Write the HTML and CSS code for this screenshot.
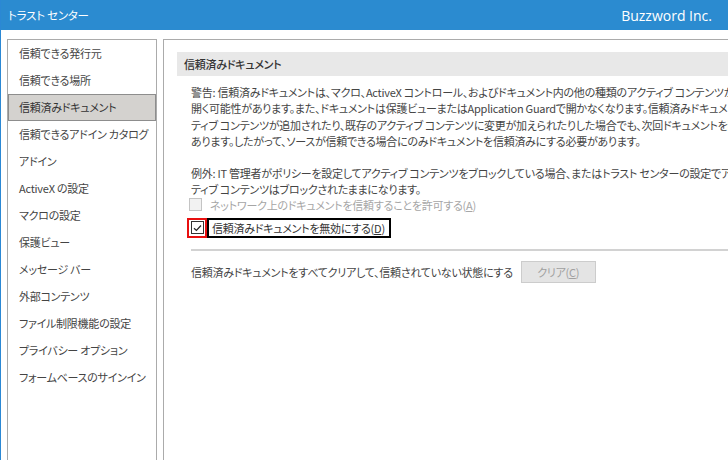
FILE: index.html
```html
<!DOCTYPE html>
<html lang="ja">
<head>
<meta charset="utf-8">
<title>トラスト センター</title>
<link rel="stylesheet" href="styles.css">
</head>
<body>
<div class="window">
  <header class="titlebar">
    <span class="title">トラスト センター</span>
    <span class="brand">Buzzword Inc.</span>
  </header>
  <div class="body">
    <nav class="nav">
      <div class="nav-item">信頼できる発行元</div>
      <div class="nav-item">信頼できる場所</div>
      <div class="nav-item selected">信頼済みドキュメント</div>
      <div class="nav-item">信頼できるアドイン カタログ</div>
      <div class="nav-item">アドイン</div>
      <div class="nav-item">ActiveX の設定</div>
      <div class="nav-item">マクロの設定</div>
      <div class="nav-item">保護ビュー</div>
      <div class="nav-item">メッセージ バー</div>
      <div class="nav-item">外部コンテンツ</div>
      <div class="nav-item">ファイル制限機能の設定</div>
      <div class="nav-item">プライバシー オプション</div>
      <div class="nav-item">フォームベースのサインイン</div>
    </nav>
    <main class="main">
      <div class="section-head">信頼済みドキュメント</div>
      <div class="content">
        <p class="para">
          <span class="line">警告: 信頼済みドキュメントは、マクロ、ActiveX コントロール、およびドキュメント内の他の種類のアクティブ コンテンツが含まれていても</span>
          <span class="line">開く可能性があります。また、ドキュメントは保護ビューまたはApplication Guardで開かなくなります。信頼済みドキュメントに新しいアク</span>
          <span class="line">ティブ コンテンツが追加されたり、既存のアクティブ コンテンツに変更が加えられたりした場合でも、次回ドキュメントを開くときに</span>
          <span class="line">あります。したがって、ソースが信頼できる場合にのみドキュメントを信頼済みにする必要があります。</span>
        </p>
        <p class="para para-ex">
          <span class="line">例外: IT 管理者がポリシーを設定してアクティブ コンテンツをブロックしている場合、またはトラスト センターの設定でアク</span>
          <span class="line">ティブ コンテンツはブロックされたままになります。</span>
        </p>
        <div class="check-row disabled">
          <span class="box"></span>
          <span class="label">ネットワーク上のドキュメントを信頼することを許可する(<u>A</u>)</span>
        </div>
        <div class="check-row">
          <span class="box-frame"><span class="box checked"><svg width="9" height="8" viewBox="0 0 9 8"><path d="M1 4.2 L3.4 6.5 L8 1.5" fill="none" stroke="#222" stroke-width="1.2"/></svg></span></span>
          <span class="label label-framed">信頼済みドキュメントを無効にする(<u>D</u>)</span>
        </div>
        <div class="sep"></div>
        <div class="clear-row">
          <span class="clear-text">信頼済みドキュメントをすべてクリアして、信頼されていない状態にする</span>
          <button class="btn" disabled>クリア(<u>C</u>)</button>
        </div>
      </div>
    </main>
  </div>
</div>
</body>
</html>
```
FILE: styles.css
```css
html, body {
  margin: 0;
  padding: 0;
  background: #ffffff;
}
body {
  font-family: "Noto Sans CJK JP", "Noto Sans", sans-serif;
  font-size: 11px;
  letter-spacing: -0.25px;
  color: #444444;
  font-feature-settings: "palt";
  overflow: hidden;
}
.window {
  width: 728px;
  height: 460px;
  box-sizing: border-box;
  border-left: 1px solid #2b88d4;
  overflow: hidden;
  display: flex;
  flex-direction: column;
}
.titlebar {
  flex: none;
  height: 30px;
  background: #2b8bd0;
  color: #ffffff;
  display: flex;
  align-items: center;
  justify-content: space-between;
  padding: 0 16px 0 7px;
}
.title {
  font-size: 11.5px;
}
.brand {
  font-family: "Open Sans", "Noto Sans", sans-serif;
  font-size: 14px;
  letter-spacing: 0;
  font-feature-settings: normal;
}
.body {
  flex: 1;
  display: flex;
  gap: 6px;
  padding: 9px 0 0 6px;
  min-height: 0;
}
.nav {
  flex: none;
  width: 148px;
  border: 1px solid #ababab;
  border-bottom: none;
}
.nav-item {
  height: 27px;
  line-height: 27px;
  padding-left: 11px;
  white-space: nowrap;
  color: #444444;
}
.nav-item.selected {
  background: #d4d2cf;
  box-sizing: border-box;
  border: 1px solid #8d8d8d;
  line-height: 25px;
  padding-left: 10px;
  color: #333333;
}
.main {
  flex: none;
  width: 800px;
  border-left: 1px solid #ababab;
  border-top: 1px solid #ababab;
  padding: 12px 0 0 13px;
}
.section-head {
  height: 24px;
  line-height: 24px;
  background: #e8e8e8;
  padding-left: 7px;
  color: #333333;
  font-weight: 500;
}
.content {
  padding-left: 14px;
}
.para {
  margin: 8px 0 0 0;
  line-height: 16.4px;
  white-space: nowrap;
}
.para-ex {
  margin-top: 15px;
  margin-bottom: -4px;
}
.line {
  display: block;
}
.check-row {
  display: flex;
  align-items: center;
  height: 23px;
  margin-left: -2px;
  white-space: nowrap;
}
.check-row.disabled {
  color: #a6a6a6;
}
.box {
  width: 13px;
  height: 13px;
  box-sizing: border-box;
  border: 1px solid #c4c4c4;
  background: #f2f2f2;
  display: flex;
  align-items: center;
  justify-content: center;
  margin-right: 8px;
}
.disabled .label {
  color: #a6a6a6;
}
.box-frame {
  width: 20px;
  height: 20px;
  box-sizing: border-box;
  border: 2px solid #e81010;
  display: flex;
  align-items: center;
  justify-content: center;
  margin-left: -2px;
}
.box.checked {
  margin-right: 0;
  border-color: #333333;
  background: #ffffff;
}
.label-framed {
  height: 20px;
  box-sizing: border-box;
  border: 2px solid #000000;
  padding: 0 4px 0 3px;
  line-height: 16px;
  color: #333333;
}
.sep {
  height: 2px;
  background: #d2d2d2;
  margin: 10px 0 0 0;
}
.clear-row {
  display: flex;
  align-items: center;
  margin-top: 10px;
  gap: 8px;
  white-space: nowrap;
}
.btn {
  width: 75px;
  height: 22px;
  box-sizing: border-box;
  border: 1px solid #cccccc;
  background: #e4e4e4;
  color: #a0a0a0;
  font-family: inherit;
  font-size: 11px;
  letter-spacing: -0.25px;
  font-feature-settings: "palt";
  padding: 0;
}
```
